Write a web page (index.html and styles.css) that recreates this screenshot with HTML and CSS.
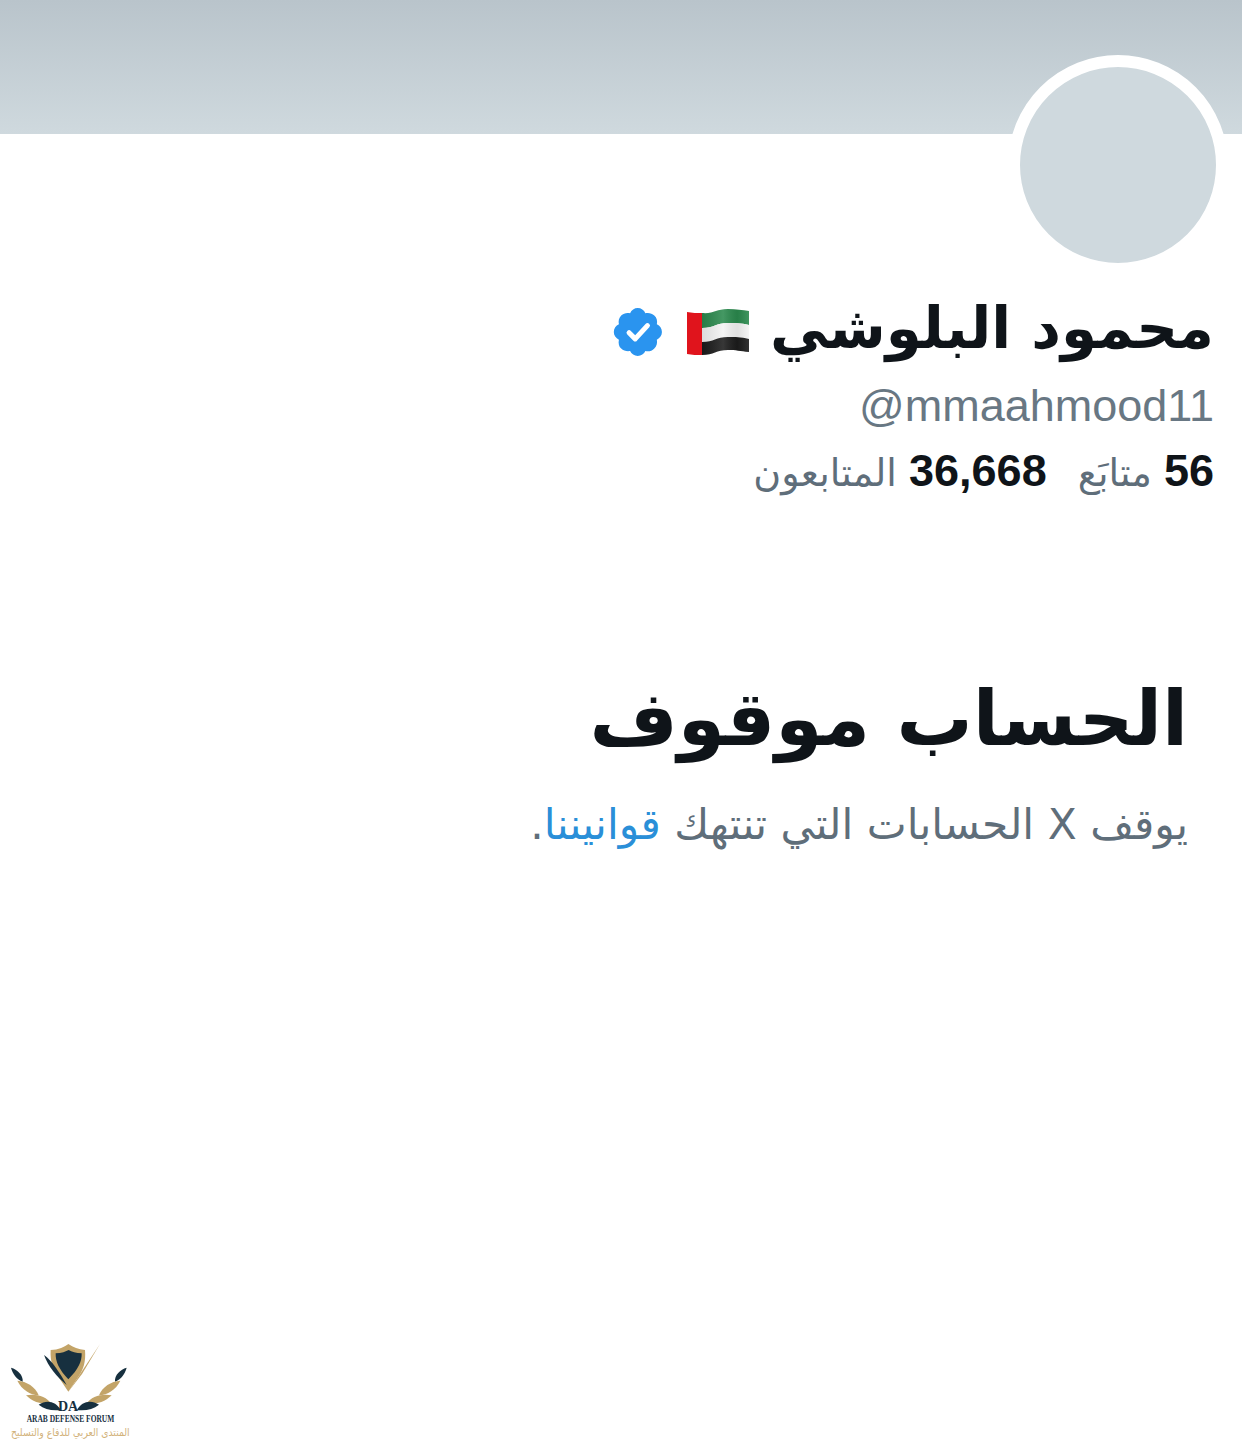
FILE: index.html
```html
<!DOCTYPE html>
<html lang="ar" dir="rtl">

<head>
    <meta charset="UTF-8">
    <meta name="viewport" content="width=device-width, initial-scale=1.0">
    <title>الحساب موقوف</title>
    <link rel="stylesheet" href="styles.css">
</head>

<body>

    <div class="banner"></div>

    <div class="profile">
        <div class="avatar"></div>

        <div class="name-row">
            <h2 class="name">محمود البلوشي</h2>
            <svg class="flag" viewBox="0 0 64 48" aria-hidden="true">
                <defs>
                    <linearGradient id="shade" x1="0" y1="0" x2="1" y2="0">
                        <stop offset="0" stop-color="#000" stop-opacity="0.1" />
                        <stop offset="0.45" stop-color="#fff" stop-opacity="0.12" />
                        <stop offset="0.75" stop-color="#000" stop-opacity="0.08" />
                        <stop offset="1" stop-color="#fff" stop-opacity="0.1" />
                    </linearGradient>
                </defs>
                <path fill="#2b8a4e" d="M16 5C28 6 30 1 42 1 50 1 56 2 63 3V17C54 15 50 15 42 15 30 15 28 20 16 20Z" />
                <path fill="#f4f4f4" d="M16 20C28 20 30 15 42 15 50 15 54 15 63 17V31C54 29 50 29 42 29 30 29 28 34 16 34Z" />
                <path fill="#1c1c1c" d="M16 34C28 34 30 29 42 29 50 29 54 29 63 31V44C54 43 50 42 42 42 30 42 28 47 16 47Z" />
                <path fill="#e0141c" d="M1 4C6 5 11 5 16 5V47C11 47 6 47 1 46Z" />
                <path fill="url(#shade)" d="M16 5C28 6 30 1 42 1 50 1 56 2 63 3V44C54 43 50 42 42 42 30 42 28 47 16 47Z" />
            </svg>
            <svg class="verified" viewBox="0 0 22 22" aria-hidden="true">
                <path fill="#2a94ef" d="M20.4 11c0-1.3-.8-2.5-2-3 .3-1.300 0-2.700-1-3.500-.9-.9-2.200-1.200-3.500-.9-.5-1.200-1.700-2-3-2s-2.500.8-3 2c-1.300-.3-2.600 0-3.500.9-.9.9-1.200 2.200-.9 3.500-1.200.5-2 1.700-2 3s.8 2.500 2 3c-.3 1.300 0 2.700.9 3.500.9.9 2.200 1.200 3.500 1 .5 1.200 1.700 1.900 3 1.900s2.500-.7 3-1.900c1.300.3 2.600 0 3.500-1 .9-.9 1.300-2.200 1-3.500 1.200-.5 2-1.700 2-3z" />
                <path fill="none" stroke="#fff" stroke-width="2" stroke-linecap="round" stroke-linejoin="round" d="M7.500 11.300l2.400 2.400 4.800-5.200" />
            </svg>
        </div>

        <div class="handle" dir="ltr">@mmaahmood11</div>

        <div class="stats">
            <span class="stat"><b>56</b> متابَع</span>
            <span class="stat"><b>36,668</b> المتابعون</span>
        </div>
    </div>

    <div class="notice">
        <h1>الحساب موقوف</h1>
        <p>يوقف X الحسابات التي تنتهك <a href="#">قوانيننا</a>.</p>
    </div>

    <!-- forum watermark, bottom left corner -->
    <div class="watermark" dir="ltr">
        <svg class="wm-logo" viewBox="24 30 372 216" aria-hidden="true">
            <defs>
                <g id="wing">
                    <path fill="#17303f" d="M33 113C52 118 70 135 68 155 50 148 38 132 33 113Z" />
                    <path fill="#c3a468" d="M52 152C80 154 106 170 116 196 90 194 66 180 52 152Z" />
                    <path fill="#c3a468" d="M78 196C105 190 140 198 154 222 125 224 98 216 78 196Z" />
                    <path fill="#17303f" d="M116 224C140 208 168 214 182 240 155 243 134 238 116 224Z" />
                </g>
            </defs>
            <path fill="#c3a468" d="M152 60C175 60 195 50 205 42 220 52 235 58 255 60 258 95 250 120 235 140L205 185 175 140C160 120 150 95 152 60Z" />
            <path fill="#17303f" d="M167 70C185 70 198 64 206 60 215 65 228 70 245 70 246 95 235 118 205 148 178 120 166 95 167 70Z" />
            <path fill="#c3a468" d="M205 185 300 42 246 132Z" />
            <path fill="#17303f" d="M132 75C155 90 180 130 200 165 170 140 145 110 132 75Z" />
            <use href="#wing" />
            <use href="#wing" transform="matrix(-1 0 0 1 413 0)" />
        </svg>
        <div class="wm-mark">DA</div>
        <div class="wm-en">ARAB DEFENSE FORUM</div>
        <div class="wm-ar" dir="rtl">المنتدى العربي للدفاع والتسليح</div>
    </div>

</body>

</html>
```

FILE: styles.css
```css
/* Page */
html,
body {
    overflow: hidden;
}

body {
    margin: 0;
    height: 1441px;
    position: relative;
    background: #fff;
    color: #0f1419;
    font-family: "DejaVu Sans", sans-serif;
}

/* Header */
.banner {
    height: 134px;
    background: linear-gradient(to bottom, #b9c4cb, #cfd9de);
}

.profile {
    padding: 0 28px 0 0;
}

.avatar {
    width: 196px;
    height: 196px;
    margin: -79px -14px 0 0;
    position: relative;
    background: #cfd9de;
    border: 12px solid #fff;
    border-radius: 50%;
}

.name-row {
    display: flex;
    align-items: center;
    margin-top: 11px;
    height: 84px;
}

.name {
    margin: 0;
    font-size: 58px;
    font-weight: 700;
    line-height: 84px;
}

.flag {
    width: 64px;
    height: 48px;
    margin: 7px 20px 0 0;
}

.verified {
    width: 56px;
    height: 56px;
    margin: 7px 20px 0 0;
}

.handle {
    text-align: right;
    font-family: "Liberation Sans", sans-serif;
    font-size: 45px;
    line-height: 54px;
    color: #687783;
    margin-top: 9px;
}

.stats {
    display: flex;
    gap: 31px;
    margin-top: 13px;
    font-size: 38px;
    line-height: 50px;
    color: #5f6e7a;
}

.stat b {
    font-family: "Liberation Sans", sans-serif;
    font-size: 45px;
    color: #0f1419;
}

/* Suspended notice */
.notice {
    padding: 0 54px 0 0;
    margin-top: 171px;
}

.notice h1 {
    margin: 0;
    font-size: 76px;
    font-weight: 700;
    line-height: 100px;
}

.notice p {
    margin: 26px 0 0 0;
    font-size: 42.4px;
    line-height: 60px;
    color: #5f6e7a;
}

.notice a {
    color: #2a8fd8;
    text-decoration: none;
}

/* Watermark */
.watermark {
    position: absolute;
    left: 8px;
    bottom: 1px;
    width: 124px;
    height: 100px;
    display: flex;
    flex-direction: column;
    align-items: center;
}

.wm-logo {
    display: block;
    width: 124px;
    height: 72px;
}

.wm-mark {
    position: absolute;
    left: 0;
    top: 60px;
    width: 120px;
    text-align: center;
    font-family: "Liberation Serif", serif;
    font-size: 14px;
    font-weight: 700;
    line-height: 14px;
    color: #17303f;
}

.wm-en {
    font-family: "Liberation Serif", serif;
    font-size: 11px;
    font-weight: 700;
    line-height: 12px;
    color: #17303f;
    white-space: nowrap;
    transform: scaleX(0.68);
}

.wm-ar {
    font-size: 10.500px;
    line-height: 16px;
    color: #d2b27a;
    white-space: nowrap;
    transform: scaleX(0.88);
}
```
